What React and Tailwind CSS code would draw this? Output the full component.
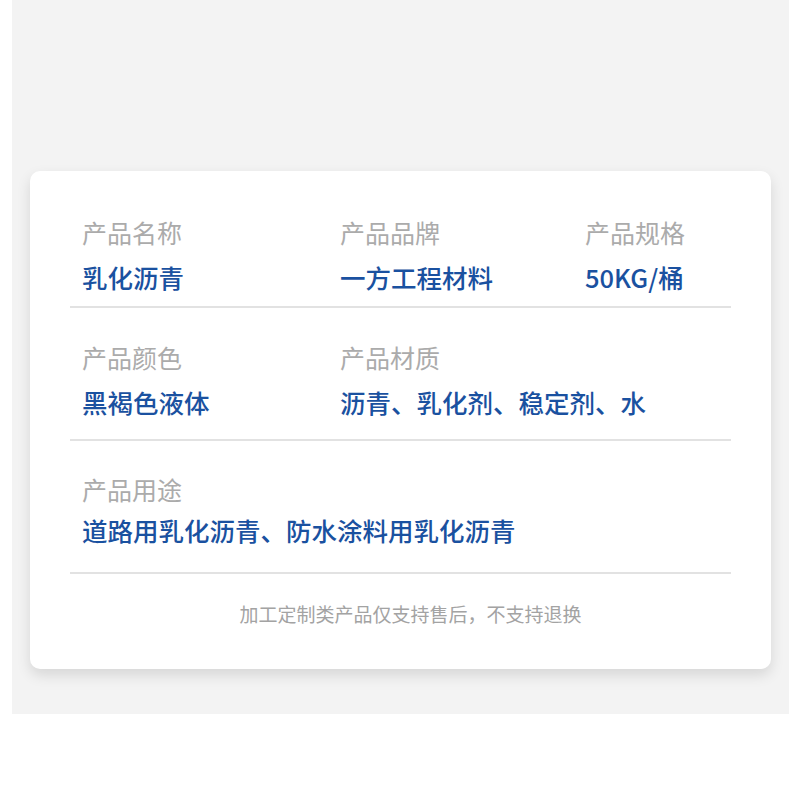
export default function App() {
  const font = { fontFamily: '"Noto Sans CJK SC", "Noto Sans", sans-serif' };
  const Label = ({ children }) => (
    <div className="text-[25px] leading-[30px] text-[#ababab]">{children}</div>
  );
  const Value = ({ children }) => (
    <div className="text-[25.5px] leading-[30px] font-medium text-[#1a51a0]">{children}</div>
  );
  return (
    <div className="w-[800px] h-[800px] bg-white" style={font}>
      <div className="ml-[12px] w-[777px] h-[714px] bg-[#f3f3f3] pt-[171px]">
        <div className="ml-[18px] w-[741px] h-[498px] rounded-[10px] bg-white shadow-[0_6px_14px_rgba(0,0,0,0.12)] px-[40px]">
          <div className="pt-[46px] pb-[14px] pl-[12px] border-b-2 border-[#e2e2e2] grid grid-cols-[258px_245px_1fr]">
            <div className="flex flex-col gap-[15px]"><Label>产品名称</Label><Value>乳化沥青</Value></div>
            <div className="flex flex-col gap-[15px]"><Label>产品品牌</Label><Value>一方工程材料</Value></div>
            <div className="flex flex-col gap-[15px]"><Label>产品规格</Label><Value>50KG/桶</Value></div>
          </div>
          <div className="pt-[34px] pb-[22px] pl-[12px] border-b-2 border-[#e2e2e2] grid grid-cols-[258px_1fr]">
            <div className="flex flex-col gap-[15px]"><Label>产品颜色</Label><Value>黑褐色液体</Value></div>
            <div className="flex flex-col gap-[15px]"><Label>产品材质</Label><Value>沥青、乳化剂、稳定剂、水</Value></div>
          </div>
          <div className="pt-[33px] pb-[27px] pl-[12px] border-b-2 border-[#e2e2e2]">
            <div className="flex flex-col gap-[11px]"><Label>产品用途</Label><Value>道路用乳化沥青、防水涂料用乳化沥青</Value></div>
          </div>
          <div className="pt-[27px] pl-[20px] text-center text-[19px] leading-[26px] text-[#a3a3a3]">
            加工定制类产品仅支持售后，不支持退换
          </div>
        </div>
      </div>
    </div>
  );
}
